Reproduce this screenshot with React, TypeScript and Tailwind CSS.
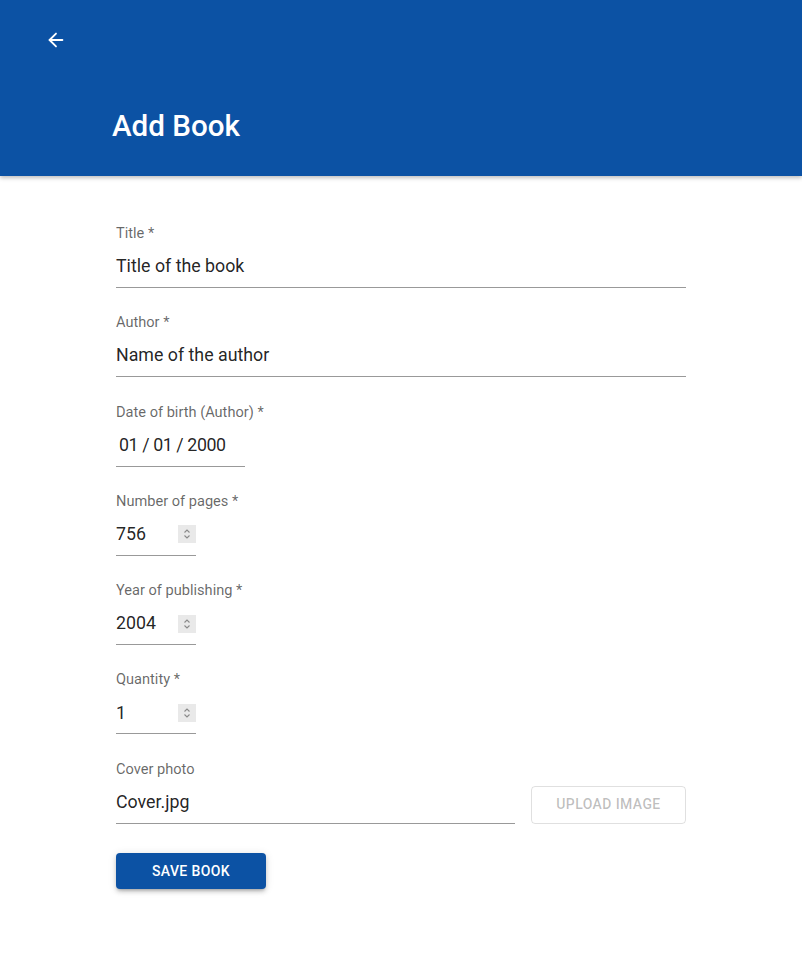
import { ArrowLeft } from "lucide-react";

const Spinner = () => (
  <div className="flex h-[18px] w-[18px] flex-col items-center justify-center bg-[#e9e9e9]">
    <svg width="8" height="12" viewBox="0 0 8 12" fill="none" stroke="#8a8a8a" strokeWidth="1.1">
      <path d="M1.5 4.5 L4 2 L6.5 4.5" />
      <path d="M1.5 7.5 L4 10 L6.5 7.5" />
    </svg>
  </div>
);

interface FieldProps {
  label: string;
  value: string;
  width?: string;
  spinner?: boolean;
  date?: boolean;
}

const Field = ({ label, value, width = "w-full", spinner = false, date = false }: FieldProps) => (
  <div className="flex flex-col">
    <label className="h-5 text-[14.6px] leading-5 text-black/60">{label}</label>
    <div className={`flex h-[45px] items-center justify-between border-b border-black/40 pt-[3px] ${width}`}>
      <span className={`text-[17.8px] text-black/87 ${date ? "pl-[3px] tracking-[-0.4px]" : ""}`}>{value}</span>
      {spinner ? <Spinner /> : null}
    </div>
  </div>
);

export default function App() {
  return (
    <div className="min-h-[953px] bg-white font-['Roboto',sans-serif]">
      <header className="relative h-[176px] bg-[#0c52a4] shadow-[0_2px_4px_rgba(0,0,0,0.25)]">
        <div className="flex h-[80px] items-center pl-[45px]">
          <ArrowLeft className="h-[22px] w-[22px] text-white" strokeWidth={2} />
        </div>
        <h1 className="pl-[112px] pt-[32px] text-[29.6px] font-medium leading-none text-white">Add Book</h1>
      </header>

      <main className="flex w-[686px] flex-col gap-[24.3px] pl-[116px] pt-[47px]">
        <Field label="Title *" value="Title of the book" />
        <Field label="Author *" value="Name of the author" />
        <Field label="Date of birth (Author) *" value="01 / 01 / 2000" width="w-[129px]" date />
        <Field label="Number of pages *" value="756" width="w-[80px]" spinner />
        <Field label="Year of publishing *" value="2004" width="w-[80px]" spinner />
        <Field label="Quantity *" value="1" width="w-[80px]" spinner />
        <div className="flex items-end gap-4">
          <div className="flex-1">
            <Field label="Cover photo" value="Cover.jpg" />
          </div>
          <button
            disabled
            className="h-[38px] w-[155px] rounded border border-black/12 text-[14px] font-medium uppercase tracking-[0.4px] text-black/26"
          >
            Upload Image
          </button>
        </div>
        <div className="pt-[5px]">
          <button className="h-[36px] w-[150px] rounded bg-[#0c52a4] text-[14px] font-medium uppercase tracking-[0.4px] text-white shadow-[0_3px_3px_-2px_rgba(0,0,0,0.2),0_3px_4px_0_rgba(0,0,0,0.14),0_1px_8px_0_rgba(0,0,0,0.12)]">
            Save Book
          </button>
        </div>
      </main>
    </div>
  );
}
